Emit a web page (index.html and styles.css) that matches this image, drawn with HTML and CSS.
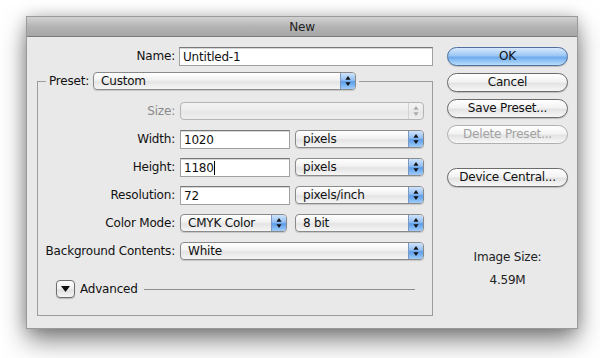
FILE: index.html
```html
<!DOCTYPE html>
<html lang="en">
<head>
  <meta charset="UTF-8">
  <title>New</title>
  <link rel="stylesheet" href="styles.css">
</head>
<body>
  <div class="window">
    <div class="titlebar">New</div>

    <div class="content">
      <!-- Left side: the form -->
      <div class="form">
        <div class="name-row">
          <span class="label">Name:</span>
          <div class="input name-input">Untitled-1</div>
        </div>

        <fieldset class="preset">
          <legend class="preset-legend">
            <span class="legend-label">Preset:</span>
            <div class="popup preset-popup"><span class="popup-text">Custom</span><span class="arrows"></span></div>
          </legend>

          <div class="rows">
            <span class="label off">Size:</span>
            <div class="field">
              <div class="popup wide disabled"><span class="popup-text"></span><span class="arrows"></span></div>
            </div>

            <span class="label">Width:</span>
            <div class="field">
              <div class="input num">1020</div>
              <div class="popup unit"><span class="popup-text">pixels</span><span class="arrows"></span></div>
            </div>

            <span class="label">Height:</span>
            <div class="field">
              <div class="input num">1180<span class="caret"></span></div>
              <div class="popup unit"><span class="popup-text">pixels</span><span class="arrows"></span></div>
            </div>

            <span class="label">Resolution:</span>
            <div class="field">
              <div class="input num">72</div>
              <div class="popup unit"><span class="popup-text">pixels/inch</span><span class="arrows"></span></div>
            </div>

            <span class="label">Color Mode:</span>
            <div class="field color-field">
              <div class="popup mode"><span class="popup-text">CMYK Color</span><span class="arrows"></span></div>
              <div class="popup unit"><span class="popup-text">8 bit</span><span class="arrows"></span></div>
            </div>

            <span class="label">Background Contents:</span>
            <div class="field">
              <div class="popup wide"><span class="popup-text">White</span><span class="arrows"></span></div>
            </div>
          </div>

          <div class="advanced">
            <span class="disclosure">
              <svg width="9" height="6" viewBox="0 0 9 6"><polygon points="0,0 9,0 4.5,6" fill="#111"/></svg>
            </span>
            <span class="advanced-text">Advanced</span>
            <span class="advanced-line"></span>
          </div>
        </fieldset>
      </div>

      <!-- Right side: buttons -->
      <div class="side">
        <div class="button default">OK</div>
        <div class="button">Cancel</div>
        <div class="button">Save Preset...</div>
        <div class="button disabled">Delete Preset...</div>
        <div class="button device">Device Central...</div>

        <div class="image-size">
          <div>Image Size:</div>
          <div class="image-size-value">4.59M</div>
        </div>
      </div>
    </div>
  </div>
</body>
</html>
```

FILE: styles.css
```css
/* Reset */
* {
  margin: 0;
  padding: 0;
  box-sizing: border-box;
}

body {
  font-family: 'DejaVu Sans', 'Liberation Sans', sans-serif;
  font-size: 12px;
  letter-spacing: -0.2px;
  color: #111;
  background: #fff;
  width: 600px;
  height: 358px;
  overflow: hidden;
  padding: 17px 0 0 27px;
}

/* Dialog window */
.window {
  width: 550px;
  height: 311px;
  background: #e9e9e9;
  box-shadow: 0 0 0 1px #9a9a9a, 0 12px 24px rgba(0, 0, 0, 0.5), 0 0 14px rgba(0, 0, 0, 0.22);
}

.titlebar {
  height: 20px;
  line-height: 20px;
  text-align: center;
  font-size: 12px;
  color: #222;
  background: linear-gradient(#d2d2d2, #b4b4b4 50%, #a6a6a6);
  border-bottom: 1px solid #7c7c7c;
}

.content {
  display: flex;
  padding: 10px 9px 10px 10px;
}

.form {
  width: 396px;
}

.label {
  text-align: right;
  line-height: 19px;
  white-space: nowrap;
}

.label.off {
  color: #8a8a8a;
}

/* Name row */
.name-row {
  display: flex;
  gap: 4px;
}

.name-row .label {
  width: 138px;
}

.name-input {
  width: 254px;
}

/* Text inputs */
.input {
  height: 19px;
  line-height: 18px;
  padding-left: 3px;
  background: #fff;
  border: 1px solid #a0a0a0;
  border-top-color: #787878;
  box-shadow: inset 0 1px 0 #d6d6d6;
}

.input.num {
  width: 110px;
}

.caret {
  display: inline-block;
  width: 1px;
  height: 14px;
  background: #000;
  vertical-align: -3px;
}

/* Preset group */
.preset {
  margin-top: 6px;
  width: 396px;
  border: 1px solid #9c9c9c;
  padding: 12px 0 17px 0;
}

.preset-legend {
  display: flex;
  align-items: center;
  gap: 4px;
  margin-left: 8px;
  padding: 0 3px;
}

.preset-popup {
  width: 263px;
}

/* Rows grid */
.rows {
  display: grid;
  grid-template-columns: 137px 244px;
  column-gap: 5px;
  row-gap: 9px;
}

.field {
  display: flex;
  gap: 5px;
}

.color-field {
  gap: 8px;
}

/* Popup menus */
.popup {
  display: flex;
  height: 18px;
  border: 1px solid #8a8a8a;
  border-radius: 4px;
  background: linear-gradient(#ffffff, #f1f1f1 45%, #e4e4e4 55%, #f6f6f6);
  box-shadow: 0 1px 1px rgba(0, 0, 0, 0.15);
  overflow: hidden;
}

.popup-text {
  flex: 1;
  line-height: 16px;
  padding-left: 7px;
  white-space: nowrap;
}

.arrows {
  width: 15px;
  border-left: 1px solid #7b98c4;
  background:
    url("data:image/svg+xml,%3Csvg xmlns='http://www.w3.org/2000/svg' width='7' height='11'%3E%3Cpolygon points='3.5,0 6.5,4 0.5,4' fill='%23111'/%3E%3Cpolygon points='0.5,7 6.5,7 3.5,11' fill='%23111'/%3E%3C/svg%3E") center / 6px 10px no-repeat,
    linear-gradient(#cfe3fb, #92bff3 45%, #5d9de9 55%, #9fcdfa);
}

.popup.disabled {
  border-color: #b4b4b4;
  box-shadow: none;
  background: linear-gradient(#f4f4f4, #ebebeb 50%, #e6e6e6 55%, #efefef);
}

.popup.disabled .arrows {
  border-left: 1px solid #d2d2d2;
  background:
    url("data:image/svg+xml,%3Csvg xmlns='http://www.w3.org/2000/svg' width='7' height='11'%3E%3Cpolygon points='3.5,0 6.5,4 0.5,4' fill='%23aaa'/%3E%3Cpolygon points='0.5,7 6.5,7 3.5,11' fill='%23aaa'/%3E%3C/svg%3E") center / 6px 10px no-repeat;
}

.popup.wide {
  width: 244px;
}

.popup.unit {
  width: 129px;
}

.popup.mode {
  width: 107px;
}

/* Advanced disclosure */
.advanced {
  display: flex;
  align-items: center;
  margin: 19px 17px 0 18px;
  height: 18px;
}

.disclosure {
  display: flex;
  align-items: center;
  justify-content: center;
  width: 19px;
  height: 18px;
  border: 1px solid #6e6e6e;
  border-radius: 4px;
  background: linear-gradient(#ffffff, #efefef 50%, #e0e0e0 55%, #f5f5f5);
  box-shadow: 0 1px 1px rgba(0, 0, 0, 0.2);
}

.advanced-text {
  margin-left: 5px;
}

.advanced-line {
  flex: 1;
  height: 1px;
  margin-left: 6px;
  background: #8e8e8e;
}

/* Right column */
.side {
  width: 121px;
  margin-left: 14px;
  display: flex;
  flex-direction: column;
  gap: 7px;
}

.button {
  height: 19px;
  line-height: 17px;
  text-align: center;
  border: 1px solid #6b6b6b;
  border-radius: 10px;
  background: linear-gradient(#ffffff, #f3f3f3 45%, #e3e3e3 55%, #f7f7f7);
  box-shadow: 0 1px 1px rgba(0, 0, 0, 0.18);
}

.button.default {
  border-color: #4f6f9f;
  background: linear-gradient(#d8e9fc, #9cc6f4 45%, #6fabee 55%, #b9defc);
}

.button.disabled {
  color: #a2a2a2;
  border-color: #b0b0b0;
  box-shadow: none;
}

.button.device {
  margin-top: 17px;
}

.image-size {
  margin-top: 56px;
  text-align: center;
  line-height: 15px;
  color: #222;
}

.image-size-value {
  margin-top: 8px;
}
```
